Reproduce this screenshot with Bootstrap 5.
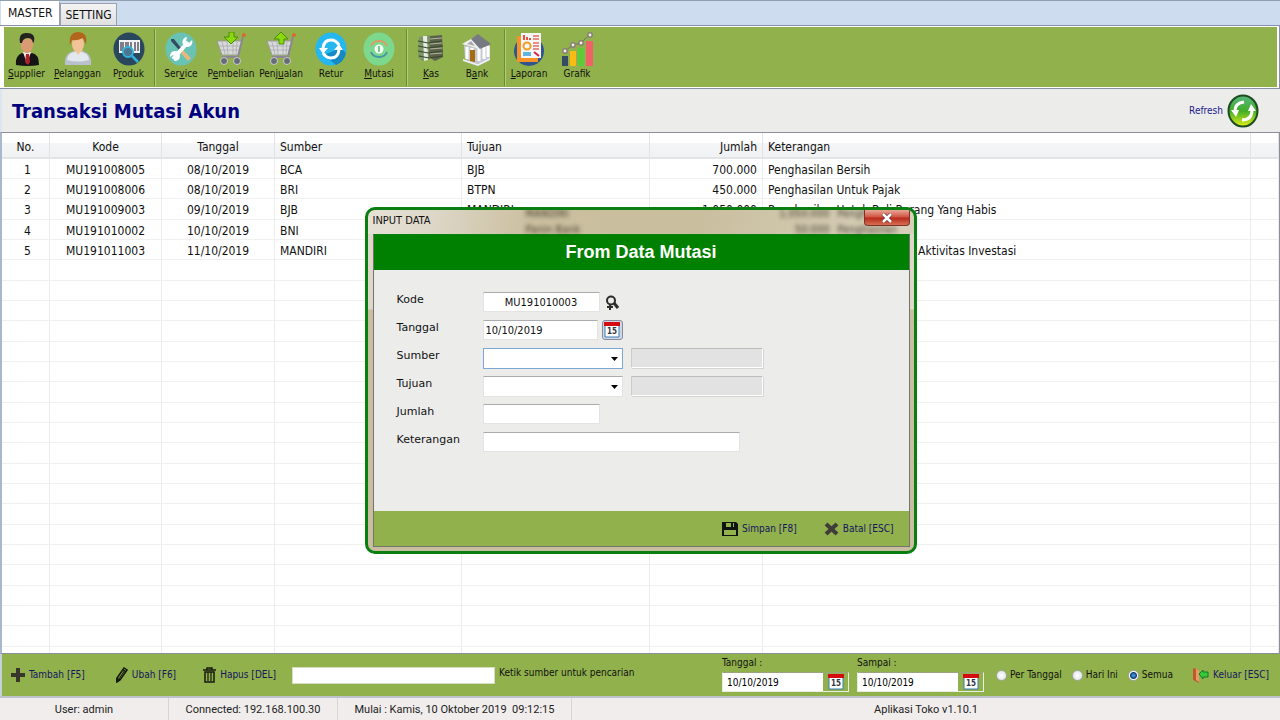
<!DOCTYPE html>
<html lang="id">
<head>
<meta charset="utf-8">
<meta name="viewport" content="width=device-width, initial-scale=1">
<title>Aplikasi Toko</title>
<link href="https://cdn.jsdelivr.net/npm/bootstrap@5.3.0/dist/css/bootstrap.min.css" rel="stylesheet">
<style>
:root{--leaf:#91b14d;--panel:#ececeb;--navy:#000080}
body{font-family:"DejaVu Sans Condensed","DejaVu Sans",sans-serif;font-size:12px;line-height:16px;color:#111;background:var(--panel)}
button{background:none;border:0;padding:0;color:inherit}
/* tabs */
.tabstrip{background:#cddcee;border-top:1px solid #8f9fb0;height:25px;padding-left:1px}
.tabstrip button{height:22px;padding:0 4px;background:linear-gradient(#f4f4f4,#e0e0e0);border:1px solid #9a9fb0;border-bottom:0}
.tabstrip button.active{height:24px;padding:0 7px 2px 6px;background:#fff;border-color:#fff #9a9fb0 #fff #fff}
/* toolbar */
.ribbon{background:#fff;border:solid #8690a8;border-width:1px 1px 1px 0;padding:1px 2px 1px 4px}
.ribbon-in{background:var(--leaf);height:60px;font-size:10px;line-height:14px}
.tools{display:flex;align-items:flex-start;padding-top:5px}
.tools-first{margin-left:-3px}
.tools button{width:50px;flex:none;white-space:nowrap}
.tools .slim{width:46px}
.tools .wide{width:51px}
.tools svg{width:32px;height:34px;display:block;margin:0 auto 1px}
.rule{width:2px;flex:none;background:#6d8a35;border-right:1px solid #b3cc7c;margin:2px 0 1px}
/* heading */
.heading{height:43px;padding:0 21px 0 10px;border-left:2px solid #dde6f0}
.heading h1{font-size:20px;font-weight:700;color:var(--navy);line-height:24px}
.link-navy{color:#1a1a8c;font-size:10px}
/* grid */
.sheet{border:1px solid #8c8f99;border-left:2px solid #a9b8cc;background:#fff;min-height:522px}
.sheet table{table-layout:fixed;width:100%;border-collapse:separate;border-spacing:0;white-space:nowrap}
.sheet th{font-weight:400;height:26px;padding:4px 5px 0;background:linear-gradient(#fff 40%,#f3f5f6 42%,#f0f2f3);border-right:1px solid #e2e4e6;border-bottom:2px solid #e2e4e6}
.sheet td{height:20px;line-height:16px;padding:2px 5px 0;border-right:1px solid #ececee;border-bottom:1px solid #f0f0f0}
.sheet tr:nth-child(3n) td{height:21px}
.sheet tr:last-child td{height:6px;padding:0;border-bottom:0}
.sheet td:first-child{padding-left:9px}
/* dialog */
.dialog-box{top:74px;width:552px;border:3px solid #087f10;border-radius:10px;padding:0 4px 4px 5px;background:linear-gradient(100deg,#e6e2d6 0,#ddd7c8 12%,#cbbf9f 30%,#c9be9e 60%,#d8d0bb 100%) top/100% 24px no-repeat,linear-gradient(#ddd8ca 99px,#c9bfa0 100px);overflow:hidden}
.caption-bar{height:24px;font-size:11px}
.caption-bar .title{left:0;top:3px}
.ghost{color:transparent;text-shadow:0 0 4px #433d30;line-height:16px;white-space:pre}
.shut{right:0;top:0;width:46px;height:16px;background:linear-gradient(#e8a797,#d0523f 48%,#b8271b 52%,#d7704f);border:1px solid #7d332b;border-top:0;border-radius:0 0 4px 4px}
.shut svg{display:block;margin:auto}
.pane{border:1px solid #74736c;border-top-color:#087f10;background:var(--panel)}
.banner{background:#008000;color:#fff;height:35px;font:700 18px/34px "Liberation Sans Narrow","Liberation Sans",sans-serif}
.fields{padding:22px 24px 0 23px;height:241px;font-family:"DejaVu Sans",sans-serif;font-size:11px}
.fields .line{display:flex;margin-bottom:7px;height:21px}
.fields label{width:86px;line-height:15px}
.box{border:1px solid #e3e3e3;border-top-color:#aaacb0;background:#fff;height:20px;padding:0 2px;border-radius:0;font:11px/14px "DejaVu Sans Condensed","DejaVu Sans",sans-serif;color:#111;min-width:0}
.box:disabled{background:#e2e2e2;border-color:#bdbdbd #fff #fff #ccc;box-shadow:1px 1px 0 #d5d5d5}
select.box{appearance:none;background:#fff url("data:image/svg+xml,%3Csvg xmlns='http://www.w3.org/2000/svg' width='7' height='4'%3E%3Cpath d='M0 0h7L3.5 4z'/%3E%3C/svg%3E") no-repeat right 4px center;width:140px;height:21px}
select.focused{border-color:#7ea8d4}
.w-code{width:117px}.w-date{width:115px}.w-note{width:257px}.w-info{width:132px}
.cal{border:1px solid #8a8a94;border-radius:3px;background:#cdd6ea;width:21px;height:20px}
.cal svg,.chooser svg{display:block;margin:auto}
.actions{background:var(--leaf);height:35px;padding-right:15px;gap:27px;font-size:10px;color:#15155e}
/* footer */
.dock{background:var(--leaf);height:42px;border-left:2px solid #c4d0dc;font-size:10px;padding:0 11px 0 9px;white-space:nowrap}
.dock button{color:#15155e}
.commands{display:flex;gap:27px}
.options{display:flex;gap:10px}
.dock .find{height:17px;width:203px;border:1px solid #d5dfc0;padding:0 2px}
.chooser{width:127px;height:20px;border:1px solid #e8eedb;border-top-color:#9ba47f;padding-right:4px}
.chooser input{height:18px;border:0;width:100px;padding:0 4px;font-size:10px}
.dock .form-check-input{width:11px;height:11px;margin:0 3px 0 0;border:1px solid #a5a5a0;background:radial-gradient(#fff,#d9dde2);float:none}
.dock .form-check-input:checked{background:radial-gradient(#3d8ccc 0 1px,#123f73 3px,#fff 4px)}
.tally{background:#f0edec;border-top:2px solid #c0c3cb;height:24px;font:11px/24px Roboto,sans-serif;color:#222}
.tally span{border-right:1px solid #d8d4d4;text-align:center;white-space:pre}
.c168{width:169px}.c234{width:234px}
</style>
</head>
<body class="d-flex flex-column min-vh-100">
<nav class="tabstrip d-flex align-items-end"><button class="active">MASTER</button><button>SETTING</button></nav>
<div class="ribbon"><div class="ribbon-in d-flex">
<div class="tools tools-first">
<button class="wide"><svg viewBox="0 0 32 34"><path d="M5 33q-1-9 6-12l5 2 5-2q7 1 7 12-11 2-23 0z" fill="#151515"/><path d="M12 20l4 12 4-12z" fill="#eee"/><path d="M15 22h3l1 8-2 3-3-3z" fill="#b3202c"/><path d="M10 8q-1 9 3 12 4 3 7-1 3-4 2-13z" fill="#d99b72"/><path d="M9 11Q7 0 16 1q9 0 7 9l-1 1q-1-5-5-5-5 0-6 5z" fill="#25211f"/></svg><u>S</u>upplier</button>
<button class="wide"><svg viewBox="0 0 32 34"><path d="M3 33q-1-12 9-14h8q10 2 9 14z" fill="#b9c1cf"/><path d="M5 28q1-7 7-8h8q6 1 7 8-11 3-22 0z" fill="#e3e7ee"/><path d="M12 18l4 5 5-5z" fill="#f3c9a4"/><ellipse cx="16" cy="12" rx="6" ry="8" fill="#f2c396"/><path d="M8 13Q6 0 17 0q9 1 7 12-2-3-3-6-6 3-11 2z" fill="#b2651d"/></svg><u>P</u>elanggan</button>
<button class="wide"><svg viewBox="0 0 32 34"><ellipse cx="16" cy="17" rx="15.500" ry="16.500" fill="#29475d"/><path d="M6 8h21v13H6z" fill="#f0f2f3"/><path d="M8 10v9m2-9v9m3-9v9m2-9v9m3-9v9m4-9v9m3-9v9" stroke="#334" stroke-width="1.200"/><circle cx="15" cy="20" r="5" fill="#4b7590" stroke="#35b2dc" stroke-width="2"/><path d="M19 24l6 6" stroke="#35b2dc" stroke-width="2.500"/></svg>P<u>r</u>oduk</button></div>
<div class="rule"></div>
<div class="tools">
<button><svg viewBox="0 0 32 34"><ellipse cx="16" cy="17" rx="15.500" ry="16.500" fill="#68c3b4"/><path d="M6 7l3 0 7 9-2 2-8-9z" fill="#354b60"/><path d="M17 17l9 9-3 3-8-9z" fill="#e9b67c"/><path d="M8 27L23 10" stroke="#fff" stroke-width="4"/><path d="M27 8a5 5 0 1 1-5-3l-1 4 3 2zM5 25a5 5 0 1 1 4 4l2-4-3-2z" fill="#fff"/></svg>Ser<u>v</u>ice</button>
<button><svg viewBox="0 0 32 34"><use href="#cart"/><path d="M14 0h5v5h4l-7 7-7-7h5z" fill="#8ad90c" stroke="#4b8c0a"/></svg>P<u>e</u>mbelian</button>
<button><svg viewBox="0 0 32 34"><use href="#cart"/><path d="M14 12h5V7h4l-7-7-7 7h5z" fill="#8ad90c" stroke="#4b8c0a"/></svg>Penj<u>u</u>alan</button>
<button><svg viewBox="0 0 32 34"><ellipse cx="16" cy="17" rx="15.500" ry="16.500" fill="#25b7ef"/><path d="M26 16l5 5q-2 9-10 12L9 23z" fill="#1589c4"/><path d="M8 16q1-8 8-8 5 0 8 5M24 18q-1 8-8 8-5 0-8-5" fill="none" stroke="#fff" stroke-width="3"/><path d="M4 16h9l-5 6zM28 18h-9l5-6z" fill="#fff"/></svg>Retur</button>
<button class="slim"><svg viewBox="0 0 32 34"><ellipse cx="16" cy="17" rx="15.500" ry="16.500" fill="#7bd88d"/><path d="M8 14q2-5 8-5t8 5" fill="none" stroke="#d8a066" stroke-width="2"/><path d="M8 20q2 5 8 5t8-5" fill="none" stroke="#4795a5" stroke-width="2"/><circle cx="16" cy="17" r="4.500" fill="#f2fff4"/><path d="M16 14v6" stroke="#52b36c" stroke-width="1.500"/></svg><u>M</u>utasi</button></div>
<div class="rule ms-1"></div>
<div class="tools">
<button class="slim"><svg viewBox="0 0 32 34"><path d="M4 5l11-2v24l-8 2-4-4z" fill="#80946a"/><path d="M15 4l12-1 1 22-8 4-6-4z" fill="#5d604b"/><path d="M8 4h4l1 24-4 1z" fill="#e5eee0"/><path d="M3 9l10 2 14-2M3 14l10 2 15-2M3 19l10 2 15-2M4 24l10 2 14-2" stroke="#354c2c" stroke-width="1.200" fill="none"/><path d="M15 7l12-1M15 12l12-1M15 17l12-1M15 22l12-1" stroke="#b1b49c"/></svg><u>K</u>as</button>
<button class="slim"><svg viewBox="0 0 32 34"><path d="M3 13l13 3 13-3v14l-12 5L4 27z" fill="#c5c8d0"/><path d="M6 15v12m5-11v12m7-12v13m5-14v12m4-13v11" stroke="#fff" stroke-width="3"/><path d="M9 18h5v12l-5-1z" fill="#a76c10"/><path d="M1 12L17 3l5 11-3 3z" fill="#f2f2f6"/><path d="M10 7l7-5 13 10-11 5z" fill="#777a80"/><path d="M6 12l4-3 4 5z" fill="#aaa"/><path d="M2 27l15 5 12-6v2l-12 6-15-5z" fill="#eef"/></svg>B<u>a</u>nk</button></div>
<div class="rule ms-1"></div>
<div class="tools">
<button class="slim"><svg viewBox="0 0 32 34"><ellipse cx="16" cy="19" rx="15" ry="15" fill="#30558e"/><path d="M4 4h5v22h16v4H4z" fill="#f69226"/><path d="M8 1h20v25H8z" fill="#f4f6f8"/><path d="M11 3v5m3-3v3m3-2v2" stroke="#e45143" stroke-width="2"/><path d="M20 4h6m-6 3h6m-6 4h6m-6 3h6m-6 3h6" stroke="#e46c62" stroke-width="1.500"/><circle cx="14" cy="14" r="3.500" stroke="#f39c27" stroke-width="2" fill="none"/><path d="M10 20h8v4h-8z" fill="#62b4df"/><path d="M21 20l5 4" stroke="#d24" stroke-width="2"/></svg><u>L</u>aporan</button>
<button><svg viewBox="0 0 32 34"><path d="M1 24h6v10H1z" fill="#374a66"/><path d="M9 19h6v15H9z" fill="#fbbb13"/><path d="M17 16h6v18h-6z" fill="#5dcb3a"/><path d="M25 9h7v25h-7z" fill="#ef6268"/><path d="M4 19l8-6 8-2 8-8" fill="none" stroke="#786d68"/><g fill="#f5eedd" stroke="#87807a" stroke-width="1.500"><circle cx="4" cy="19" r="2.200"/><circle cx="12" cy="13" r="2.200"/><circle cx="20" cy="11" r="2.200"/><circle cx="29" cy="3" r="2.200"/></g></svg>Grafik</button></div>
</div></div>
<svg width="0" height="0" class="position-absolute" aria-hidden="true"><defs>
<g id="cart"><path d="M2 9h25l-3 14H7z" fill="#d8d9da" stroke="#999"/><path d="M7 10l3 12m2-12l1 12m5-12v12m4-12l-1 12M4 14h21M5 18h20" stroke="#a8abad" stroke-width=".8"/><path d="M30 3l-2 1-5 21H7" stroke="#8d8791" stroke-width="2" fill="none"/><circle cx="29" cy="3" r="2" fill="#d96c28"/><g fill="#666b78" stroke="#ccc"><circle cx="9" cy="29" r="3.500"/><circle cx="22" cy="29" r="3.500"/></g></g>
<g id="calendar"><path d="M1 1h14v14H1z" fill="#fff" stroke="#397cae"/><path d="M0 0h16v4H0z" fill="#d40b10"/><text x="8" y="12" text-anchor="middle" font-size="8" font-weight="700" fill="#334" font-family="DejaVu Sans Condensed,sans-serif">15</text></g>
</defs></svg>
<header class="heading d-flex align-items-center justify-content-between"><h1 class="m-0">Transaksi Mutasi Akun</h1>
<button class="link-navy d-flex align-items-center gap-1">Refresh <svg width="32" height="34" viewBox="0 0 32 34"><defs><linearGradient id="lime" x2="0" y2="1"><stop stop-color="#57b884"/><stop offset=".5" stop-color="#42ad26"/><stop offset="1" stop-color="#e6ef1c"/></linearGradient></defs><ellipse cx="16" cy="17" rx="14.500" ry="15.500" fill="url(#lime)" stroke="#1d4c20" stroke-width="2"/><path d="M8 17q0-8 9-9M25 16q0 10-10 10" fill="none" stroke="#fff" stroke-width="3"/><path d="M4 16h8l-3 7zM29 17h-8l3-7z" fill="#fff"/></svg></button></header>
<main class="sheet flex-fill position-relative">
<table>
<colgroup><col style="width:48px"><col style="width:112px"><col style="width:113px"><col style="width:187px"><col style="width:188px"><col style="width:113px"><col><col style="width:28px"></colgroup>
<thead><tr class="text-center"><th>No.</th><th>Kode</th><th>Tanggal</th><th class="text-start">Sumber</th><th class="text-start">Tujuan</th><th class="text-end">Jumlah</th><th class="text-start">Keterangan</th><th></th></tr></thead>
<tbody id="rows"></tbody>
</table>
<div class="dialog-box position-absolute start-50 translate-middle-x" role="dialog" aria-labelledby="cap">
<div class="caption-bar position-relative"><span id="cap" class="title position-absolute">INPUT DATA</span>
<span class="ghost position-absolute" style="left:153px;top:-4px" aria-hidden="true">MANDIRI
Panin Bank</span>
<span class="ghost position-absolute text-end" style="right:80px;top:-4px" aria-hidden="true">1.050.000
50.000</span>
<span class="ghost position-absolute" style="left:465px;top:-4px" aria-hidden="true">Penghasilan
Penghasilan</span>
<button class="shut position-absolute" aria-label="Tutup"><svg width="12" height="10" viewBox="0 0 12 10"><path d="M2 1l8 8M10 1L2 9" stroke="#6d3b38" stroke-width="4"/><path d="M2 1l8 8M10 1L2 9" stroke="#fff" stroke-width="2.500"/></svg></button></div>
<div class="pane"><div class="banner text-center">From Data Mutasi</div>
<form class="fields">
<div class="line"><label for="kode">Kode</label><input id="kode" class="box w-code text-center" value="MU191010003"><button type="button" class="ms-1" aria-label="Cari"><svg width="16" height="16" viewBox="0 0 16 16" fill="none" stroke="#2d2d2d"><circle cx="7" cy="5.500" r="4" stroke-width="2"/><path d="M10 8l4 5" stroke-width="3"/><path d="M6 9v6M3 12h6" stroke-width="2"/></svg></button></div>
<div class="line"><label for="tgl">Tanggal</label><input id="tgl" class="box w-date" value="10/10/2019"><button type="button" class="cal ms-1" aria-label="Kalender"><svg width="16" height="16"><use href="#calendar"/></svg></button></div>
<div class="line"><label for="sumber">Sumber</label><select id="sumber" class="box focused"><option></option></select><input class="box w-info ms-2" disabled aria-label="Nama sumber"></div>
<div class="line"><label for="tujuan">Tujuan</label><select id="tujuan" class="box"><option></option></select><input class="box w-info ms-2" disabled aria-label="Nama tujuan"></div>
<div class="line"><label for="jumlah">Jumlah</label><input id="jumlah" class="box w-code"></div>
<div class="line"><label for="ket">Keterangan</label><input id="ket" class="box w-note"></div>
</form>
<div class="actions d-flex justify-content-end align-items-center">
<button class="d-flex align-items-center gap-1"><svg width="16" height="16" viewBox="0 0 16 16"><path d="M0 1h14l2 2v12H0z" fill="#111"/><path d="M4 2h8v4H4zM2 9h12v5H2z" fill="#91b14d"/><path d="M9 2h2v4H9z" fill="#111"/></svg>Simpan [F8]</button>
<button class="d-flex align-items-center gap-1"><svg width="15" height="14" viewBox="0 0 15 14"><path d="M2 2l11 10M13 2L2 12" stroke="#403c3a" stroke-width="4"/></svg>Batal [ESC]</button></div>
</div></div>
</main>
<footer>
<div class="dock d-flex align-items-center">
<div class="commands">
<button class="d-flex align-items-center"><svg class="me-1" width="14" height="14"><path d="M7 0v14M0 7h14" stroke="#39362f" stroke-width="4"/></svg>Tambah [F5]</button>
<button class="d-flex align-items-center"><svg class="mx-1" width="12" height="16" viewBox="0 0 12 16"><path d="M1 11l7-10 3 2-7 10-3 2z" fill="#79933d" stroke="#151a0d" stroke-width="1.500"/><path d="M3 12L9 3M7 3l3 2M0 15l1-4 3 2z" stroke="#151a0d" fill="#151a0d"/></svg>Ubah [F6]</button>
<button class="d-flex align-items-center"><svg class="me-1" width="13" height="16" viewBox="0 0 13 16" fill="none" stroke="#151a0d"><path d="M0 3h13M4 3V1h5v2" stroke-width="1.500"/><path d="M2 5v10h9V5z" stroke-width="1.500"/><path d="M5 5v9M8 5v9" stroke-width="1.200"/></svg>Hapus [DEL]</button></div>
<input id="cari" class="find box ms-3"><label for="cari" class="ms-1 pb-1">Ketik sumber untuk pencarian</label>
<div class="ms-auto d-flex gap-2 me-2">
<div><label for="dari" class="d-block lh-1 pb-1">Tanggal :</label><div class="chooser d-flex align-items-center justify-content-between"><input id="dari" value="10/10/2019"><button aria-label="Pilih tanggal"><svg width="16" height="16"><use href="#calendar"/></svg></button></div></div>
<div><label for="sampai" class="d-block lh-1 pb-1">Sampai :</label><div class="chooser d-flex align-items-center justify-content-between"><input id="sampai" value="10/10/2019"><button aria-label="Pilih tanggal"><svg width="16" height="16"><use href="#calendar"/></svg></button></div></div></div>
<div class="options ms-1">
<div class="d-flex align-items-center"><input class="form-check-input" type="radio" name="f" id="r1"><label for="r1">Per Tanggal</label></div>
<div class="d-flex align-items-center"><input class="form-check-input" type="radio" name="f" id="r2"><label for="r2">Hari Ini</label></div>
<div class="d-flex align-items-center"><input class="form-check-input" type="radio" name="f" id="r3" checked><label for="r3">Semua</label></div></div>
<button class="d-flex align-items-center ms-3"><svg class="ms-1 me-1" width="16" height="16" viewBox="0 0 16 16"><path d="M0 1l6 2v13l-6-3z" fill="#c4582d"/><path d="M3 2l3 1v12l-3-2z" fill="#e69a68"/><path d="M6 7l4-4v2h5v5h-5v2z" fill="#35c93c" stroke="#147b22"/></svg>Keluar [ESC]</button>
</div>
<div class="tally d-flex"><span class="c168">User: admin</span><span class="c168">Connected: 192.168.100.30</span><span class="c234">Mulai : Kamis, 10 Oktober 2019  09:12:15</span><span class="flex-fill border-0">Aplikasi Toko v1.10.1</span></div>
</footer>
<script src="https://cdn.jsdelivr.net/npm/bootstrap@5.3.0/dist/js/bootstrap.bundle.min.js"></script>
<script>
const data=[
["1","MU191008005","08/10/2019","BCA","BJB","700.000","Penghasilan Bersih"],
["2","MU191008006","08/10/2019","BRI","BTPN","450.000","Penghasilan Untuk Pajak"],
["3","MU191009003","09/10/2019","BJB","MANDIRI","1.050.000","Penghasilan Untuk Beli Barang Yang Habis"],
["4","MU191010002","10/10/2019","BNI"],
["5","MU191011003","11/10/2019","MANDIRI","","","Penghasilan Bersih Setelah Aktivitas Investasi"]];
const align=["text-center","text-center","text-center","","","text-end","",""];
const body=document.getElementById("rows");
for(let i=0;i<25;i++){const tr=body.insertRow();align.forEach((a,c)=>{const td=tr.insertCell();td.className=a;td.textContent=(data[i]||[])[c]||""})}
</script>
</body>
</html>
